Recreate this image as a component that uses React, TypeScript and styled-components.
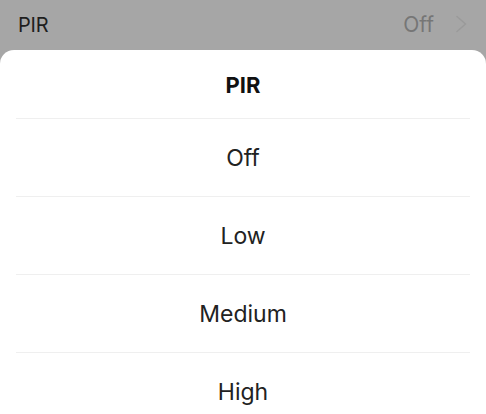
import React from 'react';
import styled, { createGlobalStyle } from 'styled-components';

const GlobalStyle = createGlobalStyle`
  html, body {
    margin: 0;
    padding: 0;
    height: 100%;
    background: #a6a6a6;
    font-family: Inter, "Liberation Sans", sans-serif;
    overflow: hidden;
  }
  #root { height: 100%; }
`;

const Screen = styled.div`
  display: flex;
  flex-direction: column;
  height: 100%;
`;

const SettingRow = styled.div`
  display: flex;
  align-items: center;
  justify-content: space-between;
  height: 50px;
  padding: 0 19px 0 18px;
  background: #a6a6a6;
  flex-shrink: 0;
`;

const RowLabel = styled.span`
  font-size: 20px;
  color: #1e1e1e;
  letter-spacing: -0.2px;
`;

const RowValue = styled.span`
  display: flex;
  align-items: center;
  gap: 21px;
  font-size: 21px;
  color: #767676;
  margin-top: -2px;
`;

const Sheet = styled.div`
  flex: 1;
  background: #fff;
  border-radius: 14px 14px 0 0;
  display: flex;
  flex-direction: column;
`;

const SheetTitle = styled.div`
  height: 68px;
  display: flex;
  align-items: center;
  justify-content: center;
  font-size: 22px;
  font-weight: 700;
  color: #111;
  padding-top: 1px;
  box-sizing: border-box;
`;

const Option = styled.div`
  height: 78px;
  margin: 0 16px;
  border-top: 1px solid #efefef;
  display: flex;
  align-items: center;
  justify-content: center;
  font-size: 23px;
  color: #222;
  box-sizing: border-box;
`;

const Chevron = () => (
  <svg width="12" height="18" viewBox="0 0 12 18" fill="none">
    <path d="M2 1.5L10.5 9L2 16.5" stroke="#9a9a9a" strokeWidth="1.5" strokeLinecap="round" strokeLinejoin="round" />
  </svg>
);

const options = ['Off', 'Low', 'Medium', 'High'];

export default function App() {
  return (
    <>
      <GlobalStyle />
      <Screen>
        <SettingRow>
          <RowLabel>PIR</RowLabel>
          <RowValue>
            Off
            <Chevron />
          </RowValue>
        </SettingRow>
        <Sheet>
          <SheetTitle>PIR</SheetTitle>
          {options.map((o) => (
            <Option key={o}>{o}</Option>
          ))}
        </Sheet>
      </Screen>
    </>
  );
}
